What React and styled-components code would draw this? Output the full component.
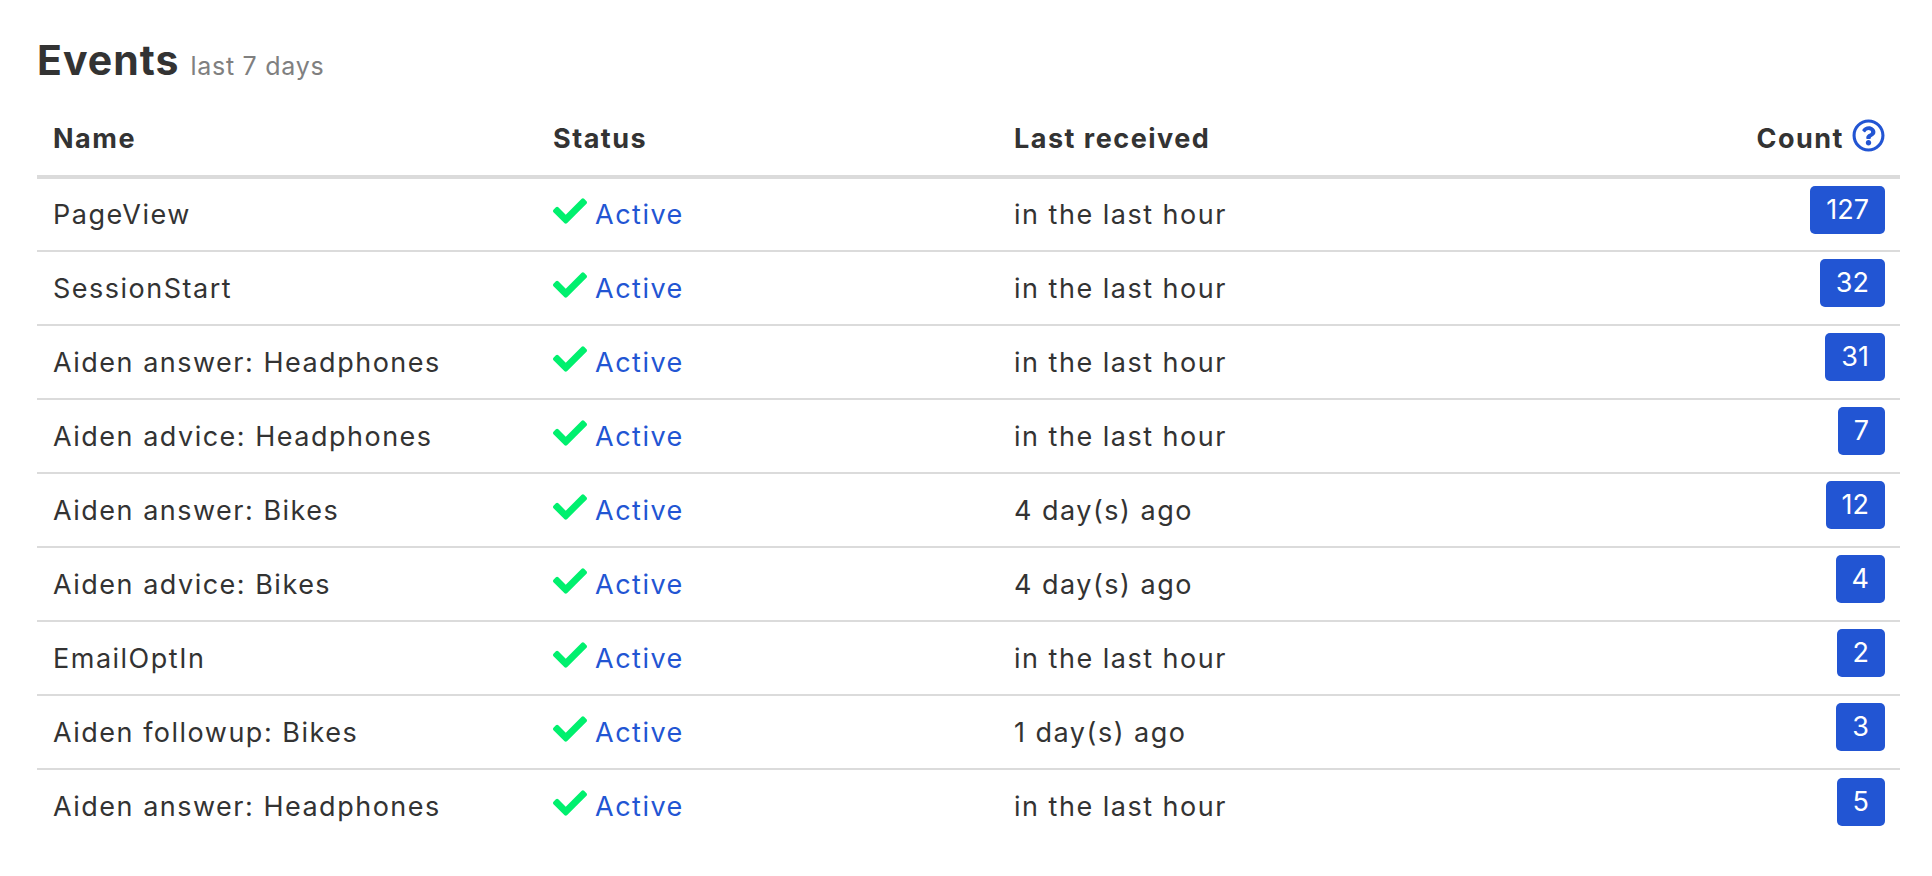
import React from "react";
import styled, { createGlobalStyle } from "styled-components";
import { FaCheck, FaRegQuestionCircle } from "react-icons/fa";

const Global = createGlobalStyle`
  html, body { margin: 0; background: #fff; }
  body { font-family: Inter, "Open Sans", sans-serif; color: #333; }
`;

const Page = styled.div`
  padding: 38px 32px 0 37px;
`;
const Heading = styled.div`
  display: flex;
  align-items: baseline;
  gap: 11px;
  height: 44px;
  margin-bottom: 30px;
`;
const Title = styled.h2`
  margin: 0;
  font-size: 41px;
  line-height: 44px;
  font-weight: 700;
  letter-spacing: 1px;
  color: #333;
`;
const Sub = styled.span`
  font-size: 25px;
  color: #808080;
  letter-spacing: 0.75px;
`;
const Table = styled.table`
  width: 1863px;
  border-collapse: collapse;
  table-layout: fixed;
  font-size: 27px;
  letter-spacing: 1.5px;
`;
const Th = styled.th`
  height: 65px;
  padding: 0 16px 11px;
  box-sizing: border-box;
  border-bottom: 4px solid #dbdbdb;
  text-align: ${(p) => p.$align || "left"};
  font-weight: 700;
  color: #333;
  width: ${(p) => p.$width || "auto"};
`;
const Td = styled.td`
  height: 74px;
  padding: 0 16px;
  box-sizing: border-box;
  border-bottom: 2px solid #dbdbdb;
  text-align: ${(p) => p.$align || "left"};
  color: #333;
  tr:last-child & {
    border-bottom: none;
  }
`;
const Status = styled.span`
  color: #2255d3;
`;
const Check = styled(FaCheck)`
  width: 34px;
  height: 34px;
  margin: -4px 8px -4px 0;
  color: #00f06e;
  vertical-align: 0;
`;
const Help = styled(FaRegQuestionCircle)`
  width: 33px;
  height: 33px;
  margin: -6px -1px -6px 8px;
  color: #2255d3;
  vertical-align: 2px;
`;
const Tag = styled.span`
  display: inline-block;
  padding: 0 16px;
  margin-right: -1px;
  height: 48px;
  line-height: 48px;
  border-radius: 5px;
  background: #2255d3;
  color: #fff;
  letter-spacing: 0;
  transform: translateY(-5px);
`;

const rows = [
  ["PageView", "in the last hour", 127],
  ["SessionStart", "in the last hour", 32],
  ["Aiden answer: Headphones", "in the last hour", 31],
  ["Aiden advice: Headphones", "in the last hour", 7],
  ["Aiden answer: Bikes", "4 day(s) ago", 12],
  ["Aiden advice: Bikes", "4 day(s) ago", 4],
  ["EmailOptIn", "in the last hour", 2],
  ["Aiden followup: Bikes", "1 day(s) ago", 3],
  ["Aiden answer: Headphones", "in the last hour", 5],
];

export default function App() {
  return (
    <Page>
      <Global />
      <Heading>
        <Title>Events</Title>
        <Sub>last 7 days</Sub>
      </Heading>
      <Table>
        <thead>
          <tr>
            <Th $width="500px">Name</Th>
            <Th $width="461px">Status</Th>
            <Th $width="500px">Last received</Th>
            <Th $align="right">
              Count
              <Help />
            </Th>
          </tr>
        </thead>
        <tbody>
          {rows.map(([name, last, count], i) => (
            <tr key={i}>
              <Td>{name}</Td>
              <Td>
                <Status>
                  <Check />
                  Active
                </Status>
              </Td>
              <Td>{last}</Td>
              <Td $align="right">
                <Tag>{count}</Tag>
              </Td>
            </tr>
          ))}
        </tbody>
      </Table>
    </Page>
  );
}
